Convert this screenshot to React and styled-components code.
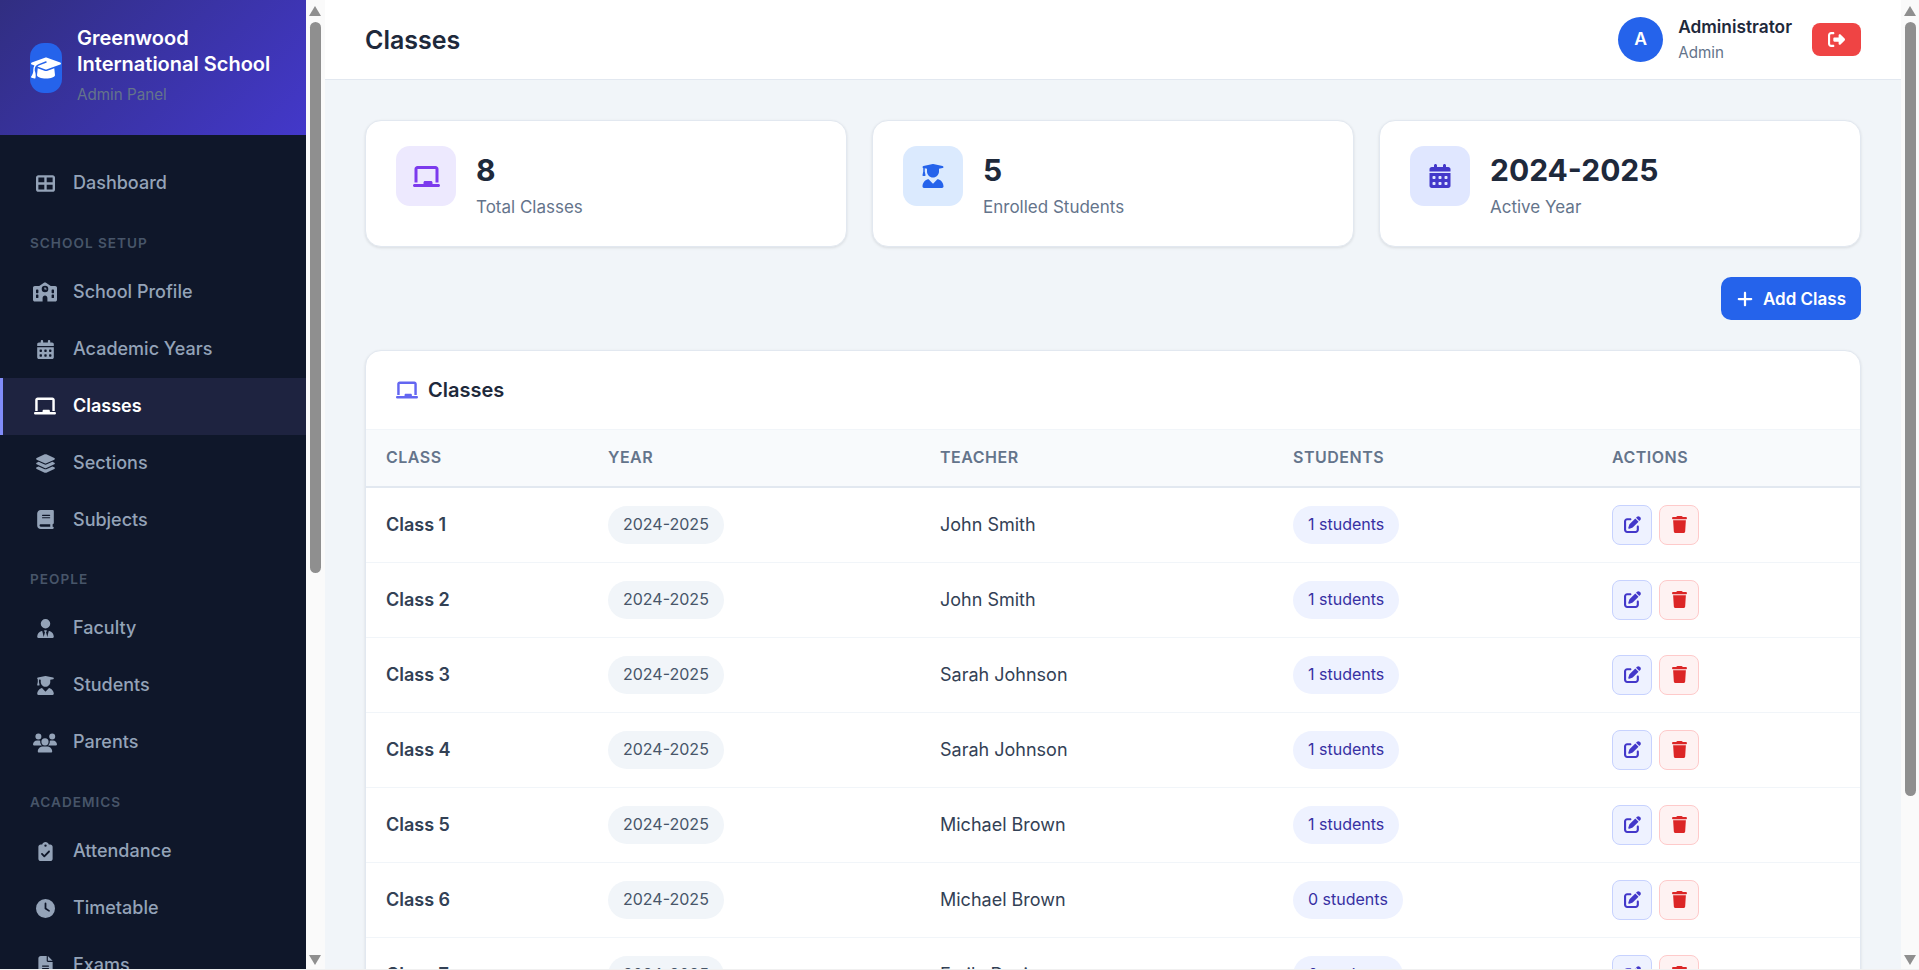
import React from "react";
import styled, { createGlobalStyle } from "styled-components";
import {
  FaTableCellsLarge,
  FaSchool,
  FaCalendarDays,
  FaChalkboard,
  FaLayerGroup,
  FaBook,
  FaUserTie,
  FaUserGraduate,
  FaUsers,
  FaClipboardCheck,
  FaClock,
  FaFileLines,
  FaGraduationCap,
  FaRightFromBracket,
  FaPlus,
  FaPenToSquare,
  FaTrash,
} from "react-icons/fa6";

const GlobalStyle = createGlobalStyle`
  * {
    box-sizing: border-box;
  }
  html, body {
    margin: 0;
    height: 100%;
    overflow: hidden;
  }
  body {
    font-family: "Inter", "Liberation Sans", sans-serif;
    line-height: 1.6;
    color: #1e293b;
    background: #f1f5f9;
  }
`;

const Page = styled.div`
  display: flex;
  width: 1919px;
  height: 970px;
  overflow: hidden;
  border-bottom: 1px solid #f0f0f0;
`;

const Sidebar = styled.aside`
  width: 306px;
  flex-shrink: 0;
  background: #0f172a;
  overflow: hidden;
`;

const Brand = styled.div`
  display: flex;
  align-items: center;
  gap: 15px;
  height: 135px;
  padding: 0 30px 3px;
  background: linear-gradient(135deg, #312e81, #4338ca);
`;

const BrandIcon = styled.div`
  width: 32px;
  height: 50px;
  margin-top: 3px;
  flex-shrink: 0;
  display: flex;
  align-items: center;
  justify-content: center;
  background: #2563eb;
  border-radius: 14px;
  color: #fff;
`;

const BrandText = styled.div`
  display: flex;
  flex-direction: column;
`;

const BrandName = styled.div`
  font-size: 20px;
  font-weight: 600;
  line-height: 26px;
  color: #fff;
`;

const BrandSub = styled.div`
  margin-top: 6px;
  font-size: 15.2px;
  line-height: 24px;
  color: #64748b;
`;

const Nav = styled.nav`
  padding-top: 20px;
`;

const NavItem = styled.a`
  display: flex;
  align-items: center;
  gap: 13px;
  padding: 14px 30px 14px ${(p) => (p.$active ? "27px" : "30px")};
  font-size: 18px;
  line-height: 28.9px;
  font-weight: ${(p) => (p.$active ? 600 : 500)};
  color: ${(p) => (p.$active ? "#fff" : "#94a3b8")};
  background: ${(p) => (p.$active ? "#1e2340" : "transparent")};
  border-left: ${(p) => (p.$active ? "3px solid #818cf8" : "none")};
`;

const NavIcon = styled.span`
  width: 30px;
  display: flex;
  justify-content: center;
`;

const NavSection = styled.div`
  padding: 20px 30px 10px;
  font-size: 13.6px;
  line-height: 22px;
  font-weight: 600;
  letter-spacing: 1px;
  text-transform: uppercase;
  color: #475569;
`;

const ScrollTrack = styled.div`
  width: ${(p) => p.$width}px;
  flex-shrink: 0;
  position: relative;
  background: #fafafa;
`;

const ScrollThumb = styled.div`
  position: absolute;
  left: 4px;
  top: 22px;
  width: 11px;
  height: ${(p) => p.$height}px;
  background: #8f8f8f;
  border-radius: 6px;
`;

const ScrollArrow = styled.div`
  position: absolute;
  left: 3px;
  width: 0;
  height: 0;
  border-left: 6.5px solid transparent;
  border-right: 6.5px solid transparent;
  ${(p) =>
    p.$down
      ? "top: 955px; border-top: 10px solid #8f8f8f;"
      : "top: 6px; border-bottom: 10px solid #8f8f8f;"}
`;

const Main = styled.main`
  flex: 1;
  min-width: 0;
  overflow: hidden;
`;

const Topbar = styled.header`
  height: 80px;
  padding: 0 40px;
  display: flex;
  align-items: center;
  justify-content: space-between;
  background: #fff;
  border-bottom: 1px solid #e2e8f0;
`;

const PageTitle = styled.h1`
  margin: 1px 0 0;
  font-size: 25px;
  font-weight: 600;
  color: #1e293b;
`;

const UserBox = styled.div`
  display: flex;
  align-items: center;
  gap: 20px;
`;

const UserInfo = styled.div`
  display: flex;
  align-items: center;
  gap: 15px;
`;

const Avatar = styled.div`
  width: 45px;
  height: 45px;
  border-radius: 50%;
  display: flex;
  align-items: center;
  justify-content: center;
  background: #2563eb;
  color: #fff;
  font-size: 17.6px;
  font-weight: 600;
`;

const UserText = styled.div`
  margin-top: -1px;
`;

const UserName = styled.div`
  font-size: 17.3px;
  font-weight: 600;
  line-height: 27px;
  color: #1e293b;
`;

const UserRole = styled.div`
  margin-top: 1px;
  font-size: 15.2px;
  line-height: 24px;
  color: #64748b;
`;

const LogoutButton = styled.button`
  width: 49px;
  height: 33px;
  padding: 0;
  border: none;
  border-radius: 8px;
  display: flex;
  align-items: center;
  justify-content: center;
  background: #ef4444;
  color: #fff;
`;

const Content = styled.div`
  padding: 40px;
`;

const Stats = styled.div`
  display: grid;
  grid-template-columns: repeat(3, 1fr);
  gap: 25px;
`;

const StatCard = styled.div`
  display: flex;
  align-items: flex-start;
  gap: 20px;
  padding: 25px 30px;
  background: #fff;
  border: 1px solid #e2e8f0;
  border-radius: 16px;
  box-shadow: 0 1px 3px rgba(0, 0, 0, 0.1);
`;

const StatIcon = styled.div`
  width: 60px;
  height: 60px;
  flex-shrink: 0;
  display: flex;
  align-items: center;
  justify-content: center;
  border-radius: 14px;
  background: ${(p) => p.$bg};
  color: ${(p) => p.$color};
`;

const StatValue = styled.div`
  font-size: 30px;
  font-weight: 700;
  line-height: 48px;
  color: #1e293b;
`;

const StatLabel = styled.div`
  margin-bottom: 1px;
  font-size: 17px;
  line-height: 26px;
  color: #64748b;
`;

const ActionRow = styled.div`
  display: flex;
  justify-content: flex-end;
  margin: 30px 0;
`;

const AddButton = styled.button`
  height: 43px;
  width: 140px;
  padding: 0;
  display: flex;
  align-items: center;
  justify-content: center;
  gap: 9px;
  border: none;
  border-radius: 10px;
  background: #2563eb;
  color: #fff;
  font-family: inherit;
  font-size: 17px;
  font-weight: 600;
`;

const TableCard = styled.section`
  background: #fff;
  border: 1px solid #e2e8f0;
  border-radius: 16px;
  box-shadow: 0 1px 3px rgba(0, 0, 0, 0.1);
  overflow: hidden;
`;

const TableHeader = styled.div`
  height: 79px;
  padding: 0 30px;
  display: flex;
  align-items: center;
  gap: 10px;
  font-size: 20px;
  font-weight: 600;
  color: #1e293b;
  border-bottom: 1px solid #f1f5f9;

  svg {
    color: #6366f1;
  }
`;

const Table = styled.table`
  width: 100%;
  table-layout: fixed;
  border-collapse: collapse;
`;

const Th = styled.th`
  height: 57px;
  padding: 0 20px;
  text-align: left;
  font-size: 16px;
  font-weight: 600;
  letter-spacing: 0.5px;
  text-transform: uppercase;
  color: #64748b;
  background: #f8fafc;
  border-bottom: 2px solid #e2e8f0;
`;

const Tr = styled.tr`
  height: 75px;
  border-bottom: 1px solid #f1f5f9;
`;

const Td = styled.td`
  padding: ${(p) => (p.$text ? "2px 20px 0" : "0 20px")};
  font-size: 18px;
  font-weight: ${(p) => (p.$bold ? 600 : 400)};
  color: #334155;
`;

const Pill = styled.span`
  display: inline-block;
  height: 38px;
  padding: 0 15px;
  line-height: 37px;
  border-radius: 19px;
  font-size: 16px;
  background: ${(p) => (p.$indigo ? "#eef2ff" : "#f1f5f9")};
  color: ${(p) => (p.$indigo ? "#3730a3" : "#475569")};
`;

const Actions = styled.div`
  display: flex;
  gap: 7px;
`;

const IconButton = styled.button`
  width: 40px;
  height: 40px;
  padding: 0;
  display: flex;
  align-items: center;
  justify-content: center;
  border-radius: 8px;
  border: 1px solid ${(p) => (p.$danger ? "#fecaca" : "#c7d2fe")};
  background: ${(p) => (p.$danger ? "#fef2f2" : "#eef2ff")};
  color: ${(p) => (p.$danger ? "#dc2626" : "#4338ca")};
`;

// icon size is the width of the square svg, so wide glyphs need a bigger one
const navGroups = [
  { items: [{ label: "Dashboard", icon: FaTableCellsLarge, size: 19 }] },
  {
    title: "School Setup",
    items: [
      { label: "School Profile", icon: FaSchool, size: 24 },
      { label: "Academic Years", icon: FaCalendarDays, size: 19 },
      { label: "Classes", icon: FaChalkboard, size: 22, active: true },
      { label: "Sections", icon: FaLayerGroup, size: 21 },
      { label: "Subjects", icon: FaBook, size: 19 },
    ],
  },
  {
    title: "People",
    items: [
      { label: "Faculty", icon: FaUserTie, size: 19 },
      { label: "Students", icon: FaUserGraduate, size: 19 },
      { label: "Parents", icon: FaUsers, size: 24 },
    ],
  },
  {
    title: "Academics",
    items: [
      { label: "Attendance", icon: FaClipboardCheck, size: 19 },
      { label: "Timetable", icon: FaClock, size: 19 },
      { label: "Exams", icon: FaFileLines, size: 19 },
    ],
  },
];

const stats = [
  { value: "8", label: "Total Classes", icon: FaChalkboard, size: 27, bg: "#ede9fe", color: "#7c3aed" },
  { value: "5", label: "Enrolled Students", icon: FaUserGraduate, size: 24, bg: "#dbeafe", color: "#2563eb" },
  { value: "2024-2025", label: "Active Year", icon: FaCalendarDays, size: 24, bg: "#e0e7ff", color: "#4338ca" },
];

const classes = [
  { name: "Class 1", teacher: "John Smith", students: 1 },
  { name: "Class 2", teacher: "John Smith", students: 1 },
  { name: "Class 3", teacher: "Sarah Johnson", students: 1 },
  { name: "Class 4", teacher: "Sarah Johnson", students: 1 },
  { name: "Class 5", teacher: "Michael Brown", students: 1 },
  { name: "Class 6", teacher: "Michael Brown", students: 0 },
  { name: "Class 7", teacher: "Emily Davis", students: 0 },
  { name: "Class 8", teacher: "Emily Davis", students: 0 },
];

const columns = [
  { label: "Class", width: 222 },
  { label: "Year", width: 332 },
  { label: "Teacher", width: 353 },
  { label: "Students", width: 319 },
  { label: "Actions", width: 268 },
];

function Scrollbar({ width, thumb }) {
  return (
    <ScrollTrack $width={width}>
      <ScrollArrow />
      <ScrollThumb $height={thumb} />
      <ScrollArrow $down />
    </ScrollTrack>
  );
}

export default function App() {
  return (
    <Page>
      <GlobalStyle />
      <Sidebar>
        <Brand>
          <BrandIcon>
            <FaGraduationCap size={30} />
          </BrandIcon>
          <BrandText>
            <BrandName>Greenwood International School</BrandName>
            <BrandSub>Admin Panel</BrandSub>
          </BrandText>
        </Brand>
        <Nav>
          {navGroups.map((group, i) => (
            <div key={i}>
              {group.title && <NavSection>{group.title}</NavSection>}
              {group.items.map((item) => (
                <NavItem key={item.label} $active={item.active}>
                  <NavIcon>
                    <item.icon size={item.size} />
                  </NavIcon>
                  {item.label}
                </NavItem>
              ))}
            </div>
          ))}
        </Nav>
      </Sidebar>
      <Scrollbar width={19} thumb={551} />
      <Main>
        <Topbar>
          <PageTitle>Classes</PageTitle>
          <UserBox>
            <UserInfo>
              <Avatar>A</Avatar>
              <UserText>
                <UserName>Administrator</UserName>
                <UserRole>Admin</UserRole>
              </UserText>
            </UserInfo>
            <LogoutButton>
              <FaRightFromBracket size={17} />
            </LogoutButton>
          </UserBox>
        </Topbar>
        <Content>
          <Stats>
            {stats.map((s) => (
              <StatCard key={s.label}>
                <StatIcon $bg={s.bg} $color={s.color}>
                  <s.icon size={s.size} />
                </StatIcon>
                <div>
                  <StatValue>{s.value}</StatValue>
                  <StatLabel>{s.label}</StatLabel>
                </div>
              </StatCard>
            ))}
          </Stats>
          <ActionRow>
            <AddButton>
              <FaPlus size={18} />
              Add Class
            </AddButton>
          </ActionRow>
          <TableCard>
            <TableHeader>
              <FaChalkboard size={22} />
              Classes
            </TableHeader>
            <Table>
              <colgroup>
                {columns.map((c) => (
                  <col key={c.label} width={c.width} />
                ))}
              </colgroup>
              <thead>
                <tr>
                  {columns.map((c) => (
                    <Th key={c.label}>{c.label}</Th>
                  ))}
                </tr>
              </thead>
              <tbody>
                {classes.map((c) => (
                  <Tr key={c.name}>
                    <Td $text $bold>
                      {c.name}
                    </Td>
                    <Td>
                      <Pill>2024-2025</Pill>
                    </Td>
                    <Td $text>{c.teacher}</Td>
                    <Td>
                      <Pill $indigo>{c.students} students</Pill>
                    </Td>
                    <Td>
                      <Actions>
                        <IconButton>
                          <FaPenToSquare size={17} />
                        </IconButton>
                        <IconButton $danger>
                          <FaTrash size={17} />
                        </IconButton>
                      </Actions>
                    </Td>
                  </Tr>
                ))}
              </tbody>
            </Table>
          </TableCard>
        </Content>
      </Main>
      <Scrollbar width={18} thumb={774} />
    </Page>
  );
}
